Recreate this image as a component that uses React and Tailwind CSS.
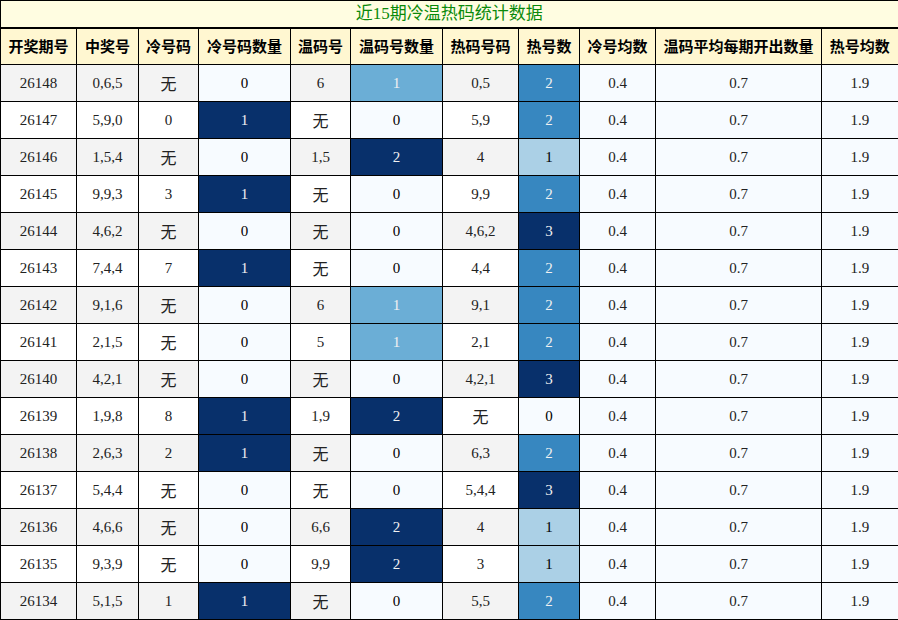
import React from "react";

const ROWS = [
  ["26148", "0,6,5", "无", 0, "6", 1, "0,5", 2],
  ["26147", "5,9,0", "0", 1, "无", 0, "5,9", 2],
  ["26146", "1,5,4", "无", 0, "1,5", 2, "4", 1],
  ["26145", "9,9,3", "3", 1, "无", 0, "9,9", 2],
  ["26144", "4,6,2", "无", 0, "无", 0, "4,6,2", 3],
  ["26143", "7,4,4", "7", 1, "无", 0, "4,4", 2],
  ["26142", "9,1,6", "无", 0, "6", 1, "9,1", 2],
  ["26141", "2,1,5", "无", 0, "5", 1, "2,1", 2],
  ["26140", "4,2,1", "无", 0, "无", 0, "4,2,1", 3],
  ["26139", "1,9,8", "8", 1, "1,9", 2, "无", 0],
  ["26138", "2,6,3", "2", 1, "无", 0, "6,3", 2],
  ["26137", "5,4,4", "无", 0, "无", 0, "5,4,4", 3],
  ["26136", "4,6,6", "无", 0, "6,6", 2, "4", 1],
  ["26135", "9,3,9", "无", 0, "9,9", 2, "3", 1],
  ["26134", "5,1,5", "1", 1, "无", 0, "5,5", 2],
];

const HEADERS = ["开奖期号", "中奖号", "冷号码", "冷号码数量", "温码号", "温码号数量", "热码号码", "热号数", "冷号均数", "温码平均每期开出数量", "热号均数"];
const WIDTHS = ["w-[76px]", "w-[62px]", "w-[60px]", "w-[92px]", "w-[60px]", "w-[92px]", "w-[76px]", "w-[61px]", "w-[76px]", "w-[166px]", "w-[77px]"];

// Blues colormap steps, keyed by max of the column
const COLD = { 0: "bg-[#f7fbff] text-black", 1: "bg-[#08306b] text-[#f1f1f1]" };
const WARM = { 0: "bg-[#f7fbff] text-black", 1: "bg-[#6baed6] text-[#f1f1f1]", 2: "bg-[#08306b] text-[#f1f1f1]" };
const HOT = { 0: "bg-[#f7fbff] text-black", 1: "bg-[#abd0e6] text-black", 2: "bg-[#3787c0] text-[#f1f1f1]", 3: "bg-[#08306b] text-[#f1f1f1]" };

function Plain({ v, odd }) {
  return (
    <td className={`border border-black text-center ${odd ? "bg-[#f3f3f3]" : "bg-white"}`}>
      {v === "无" ? <span className="text-[16px] relative top-[2px]">无</span> : v}
    </td>
  );
}

function Shade({ v, map }) {
  return <td className={`border border-black text-center ${map[v]}`}>{v}</td>;
}

export default function App() {
  return (
    <div className="w-[898px] h-[620px] bg-white overflow-hidden">
      <table
        className="table-fixed w-[898px] border-collapse border-b-2 border-black text-[15px] text-[#222]"
        style={{ fontFamily: '"Liberation Serif", "Noto Sans CJK SC", serif' }}
      >
        <colgroup>
          {WIDTHS.map((w, i) => <col key={i} className={w} />)}
        </colgroup>
        <thead>
          <tr className="h-[27px]">
            <th colSpan={11} className="border border-black border-b-2 border-r-2 bg-[#fffde1] text-[#0a8a0a] text-[17px] font-normal leading-none">
              近15期冷温热码统计数据
            </th>
          </tr>
          <tr className="h-[37px]">
            {HEADERS.map((h, i) => (
              <th key={h} className={`border border-black bg-[#fff7d1] text-black font-bold text-[15px] whitespace-nowrap ${i === 10 ? "border-r-2" : ""}`} style={{ fontFamily: '"Noto Sans CJK SC", sans-serif' }}>
                {h}
              </th>
            ))}
          </tr>
        </thead>
        <tbody>
          {ROWS.map((r, i) => {
            const odd = i % 2 === 0;
            return (
              <tr key={r[0]} className="h-[37px]">
                <Plain v={r[0]} odd={odd} />
                <Plain v={r[1]} odd={odd} />
                <Plain v={r[2]} odd={odd} />
                <Shade v={r[3]} map={COLD} />
                <Plain v={r[4]} odd={odd} />
                <Shade v={r[5]} map={WARM} />
                <Plain v={r[6]} odd={odd} />
                <Shade v={r[7]} map={HOT} />
                <td className="border border-black text-center bg-[#f7fbff]">0.4</td>
                <td className="border border-black text-center bg-[#f7fbff]">0.7</td>
                <td className="border border-black border-r-2 text-center bg-[#f7fbff]">1.9</td>
              </tr>
            );
          })}
        </tbody>
      </table>
    </div>
  );
}
